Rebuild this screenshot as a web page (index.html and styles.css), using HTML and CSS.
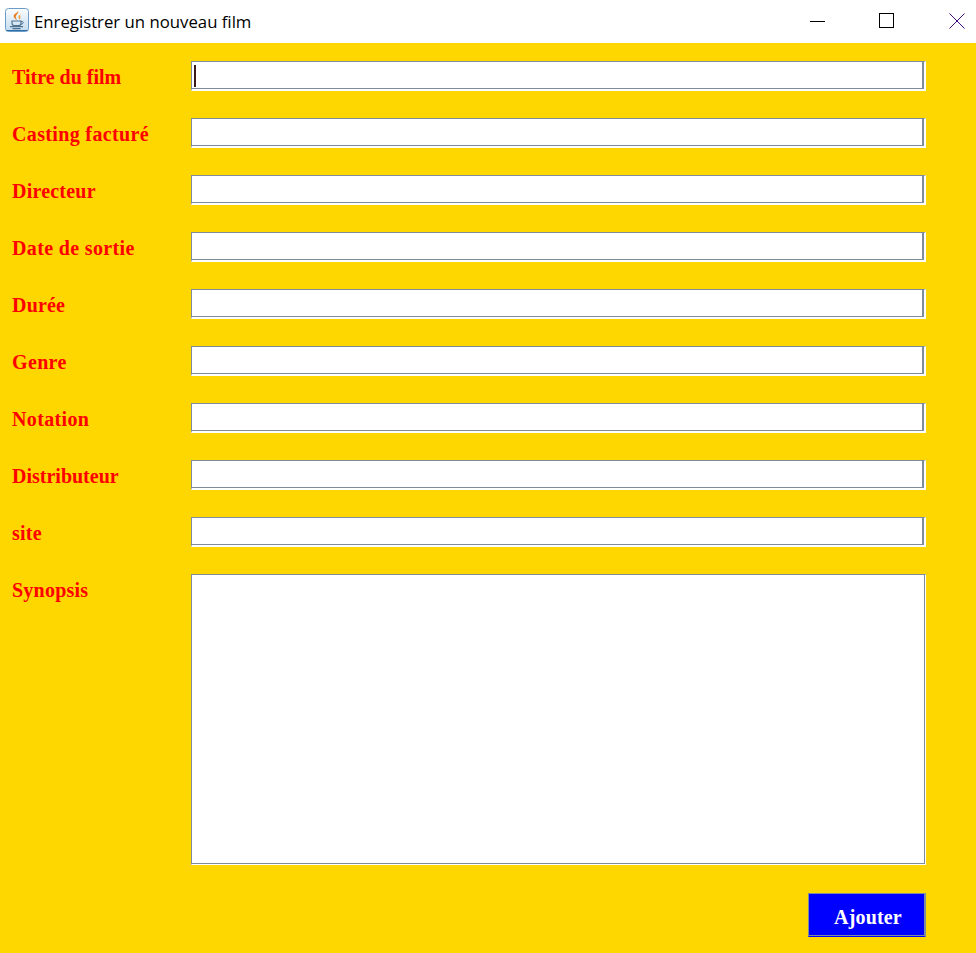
FILE: index.html
```html
<!DOCTYPE html>
<html lang="fr">
<head>
<meta charset="utf-8">
<title>Enregistrer un nouveau film</title>
<link rel="stylesheet" href="styles.css">
</head>
<body>
<div class="window">
  <header class="titlebar">
    <svg class="app-icon" width="24" height="24" viewBox="0 0 24 24">
      <defs>
        <linearGradient id="bg" x1="0" y1="0" x2="0" y2="1">
          <stop offset="0" stop-color="#fbfdfe"/>
          <stop offset="1" stop-color="#c4dbef"/>
        </linearGradient>
      </defs>
      <rect x="0.5" y="0.5" width="23" height="23" rx="3" fill="url(#bg)" stroke="#6d9cc6"/>
      <path d="M1.500 22.500h21" stroke="#2f6fa8"/>
      <path d="M13 3c1.500 2.500-3.500 4-2 7 .3.700.8 1.300 1 2-2-1.200-4-2.800-3-5C10 5.200 12.800 4.800 13 3z" fill="#ea7a1f"/>
      <path d="M15.500 6.500c-1.800.8-2.500 1.800-1.800 3 .3.600.5 1.300.3 2.200 1.300-1 2-2 1.300-3.200-.3-.6-.2-1.300.2-2z" fill="#f0a040"/>
      <path d="M7 13h9v2.500c0 1.200-1 2-2.200 2H9.200C8 17.500 7 16.700 7 15.500z" fill="none" stroke="#4f7390" stroke-width="1.200"/>
      <path d="M16 13.500h1.300c1.500 0 1.500 2.500-1.500 2.800" fill="none" stroke="#4f7390"/>
      <path d="M5 18.700h13M7.500 20.600h8" stroke="#4f7390" stroke-width="1.200"/>
    </svg>
    <span class="title">Enregistrer un nouveau film</span>
    <div class="controls">
      <button class="ctl" aria-label="Réduire"><svg width="16" height="16" viewBox="0 0 16 16"><path d="M0 8.500h15" stroke="#000"/></svg></button>
      <button class="ctl ctl-max" aria-label="Agrandir"><svg width="16" height="16" viewBox="0 0 16 16"><rect x="0.500" y="0.500" width="14" height="14" fill="none" stroke="#000"/></svg></button>
      <button class="ctl ctl-close" aria-label="Fermer"><svg width="16" height="16" viewBox="0 0 16 16"><path d="M0.500 0.500l15 15M15.500 0.500l-15 15" stroke="#3a0a7e"/></svg></button>
    </div>
  </header>
  <main class="form">
    <div class="row"><label class="label">Titre du film</label><div class="field"><span class="caret"></span></div></div>
    <div class="row"><label class="label ls-wide">Casting facturé</label><div class="field"></div></div>
    <div class="row"><label class="label ls-mid">Directeur</label><div class="field"></div></div>
    <div class="row"><label class="label ls-wide">Date de sortie</label><div class="field"></div></div>
    <div class="row"><label class="label ls-low">Durée</label><div class="field"></div></div>
    <div class="row"><label class="label ls-wide">Genre</label><div class="field"></div></div>
    <div class="row"><label class="label ls-wide">Notation</label><div class="field"></div></div>
    <div class="row"><label class="label">Distributeur</label><div class="field"></div></div>
    <div class="row"><label class="label ls-mid">site</label><div class="field"></div></div>
    <div class="row row-area"><label class="label ls-mid">Synopsis</label><div class="field area"></div></div>
    <div class="actions"><button class="submit">Ajouter</button></div>
  </main>
</div>
</body>
</html>
```
FILE: styles.css
```css
html, body { margin: 0; padding: 0; height: 100%; }
.window { display: flex; flex-direction: column; width: 976px; height: 953px; overflow: hidden; background: #ffd700; }
.titlebar { display: flex; align-items: center; height: 43px; box-sizing: border-box; background: #fff; padding-left: 5px; padding-bottom: 3px; flex: none; }
.app-icon { flex: none; }
.title { margin-left: 5px; padding-top: 2px; font: 16.750px "Open Sans", sans-serif; color: #000; }
.controls { margin-left: auto; display: flex; padding-top: 2px; padding-right: 11px; }
.ctl { width: 16px; height: 16px; padding: 0; border: 0; background: none; display: block; }
.ctl svg { display: block; }
.ctl-max { margin-left: 53px; }
.ctl-close { margin-left: 54px; }
.form { display: flex; flex-direction: column; padding: 18px 50px 0 12px; gap: 27px; }
.row { display: flex; height: 30px; }
.row-area { height: 291px; }
.label { width: 179px; flex: none; font: bold 20px/33px "Liberation Serif", serif; color: #f00; }
.ls-wide { letter-spacing: 0.35px; }
.ls-mid { letter-spacing: 0.22px; }
.ls-low { letter-spacing: 0.2px; }
.field { flex: 1; box-sizing: border-box; position: relative; background: #fff; border-style: solid; border-width: 1px 2px 2px 1px; border-color: #7f8c99 #fff #fff #7f8c99; box-shadow: inset -2px -1px 0 #7f8c99; display: block; }
.area { border-width: 1px; box-shadow: inset -1px -1px 0 #7f8c99; padding-right: 1px; }
.caret { position: absolute; left: 2px; top: 3px; width: 2px; height: 22px; background: #3a1a1a; }
.actions { display: flex; justify-content: flex-end; margin-top: 1px; }
.submit { width: 118px; height: 44px; box-sizing: border-box; background: #00f; color: #fff; font: bold 20px "Liberation Serif", serif; letter-spacing: 0.16px; border-style: solid; border-width: 1px 2px 1px 1px; border-color: #7f8c99 #7f8c99 #00f #7f8c99; box-shadow: inset 0 -1px 0 #7f8c99; padding: 4px 0 0 3px; }
```
